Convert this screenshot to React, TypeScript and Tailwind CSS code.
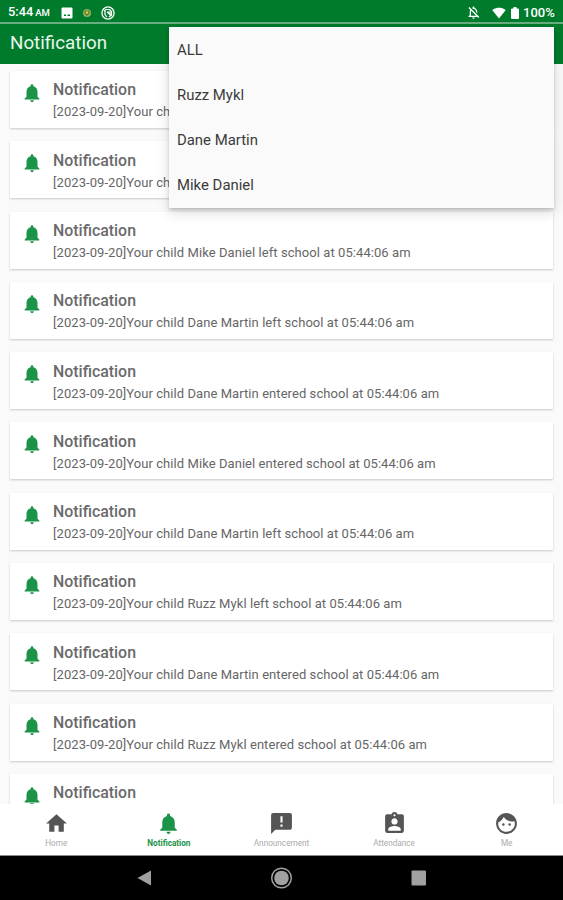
import { useState } from 'react';
import {
  MdAnnouncement,
  MdAssignmentInd,
  MdFace,
  MdHome,
  MdNotifications,
  MdOutlineNotificationsOff,
  MdSignalWifi4Bar,
} from 'react-icons/md';

const notifications = [
  { child: 'Ruzz Mykl', action: 'left' },
  { child: 'Mike Daniel', action: 'left' },
  { child: 'Mike Daniel', action: 'left' },
  { child: 'Dane Martin', action: 'left' },
  { child: 'Dane Martin', action: 'entered' },
  { child: 'Mike Daniel', action: 'entered' },
  { child: 'Dane Martin', action: 'left' },
  { child: 'Ruzz Mykl', action: 'left' },
  { child: 'Dane Martin', action: 'entered' },
  { child: 'Ruzz Mykl', action: 'entered' },
  { child: 'Ruzz Mykl', action: 'entered' },
];

const children = ['ALL', 'Ruzz Mykl', 'Dane Martin', 'Mike Daniel'];

const tabs = [
  { label: 'Home', icon: MdHome },
  { label: 'Notification', icon: MdNotifications },
  { label: 'Announcement', icon: MdAnnouncement },
  { label: 'Attendance', icon: MdAssignmentInd },
  { label: 'Me', icon: MdFace },
];

const StatusBar = () => (
  <div className="flex h-[22px] shrink-0 items-center bg-[#007b2c] pt-[3px] pl-2 pr-[7px] text-white">
    <div className="flex w-[43px] items-baseline gap-0.5 whitespace-nowrap font-medium leading-none">
      <span className="text-[12.8px]">5:44</span>
      <span className="text-[9.5px]">AM</span>
    </div>
    <svg className="ml-2.5 size-3" viewBox="0 0 12 12">
      <rect x="0.5" y="0.5" width="11" height="11" rx="1" fill="#fff" />
      <path d="M3 9V7.500h2V9zM6.500 9V7.500H9V9z" fill="#007b2c" />
    </svg>
    <svg className="ml-[9px] size-2.5" viewBox="0 0 10 10">
      <circle cx="5" cy="5" r="4" fill="#8fb36e" />
      <path d="M2.5 2.5h5v3L5 8 2.5 5.5z" fill="#657c1c" />
      <circle cx="5" cy="4.5" r="1.3" fill="#e0cf45" />
    </svg>
    <svg className="ml-[9px] size-3.5" viewBox="0 0 14 14" fill="none" stroke="#fff">
      <circle cx="7" cy="7" r="6.1" strokeWidth="1.3" />
      <path d="M3 5l2-1.500h3.500L11 6M4 4.500v4L6 11M6 6l4.500 4M10.500 6v3L8 11M6 6h3v2" strokeWidth="1.2" />
    </svg>
    <div className="ml-auto flex items-center">
      <MdOutlineNotificationsOff className="mr-[11px] size-[15px]" />
      <MdSignalWifi4Bar className="mr-[5px] size-[14px]" />
      <svg className="mr-1 h-3 w-2" viewBox="0 0 8 12" fill="#fff">
        <path d="M2.500 0h3v1.500H7a1 1 0 0 1 1 1V11a1 1 0 0 1-1 1H1a1 1 0 0 1-1-1V2.500a1 1 0 0 1 1-1h1.500z" />
      </svg>
      <span className="w-[33px] whitespace-nowrap text-[13px] font-medium leading-none">100%</span>
    </div>
  </div>
);

const App = () => {
  const [activeTab, setActiveTab] = useState('Notification');

  return (
    <div className="relative flex h-[900px] w-[563px] flex-col overflow-hidden bg-[#fafafa] font-[Roboto,sans-serif]">
      <StatusBar />
      <header className="h-[42px] shrink-0 border-t-2 border-[#69ae80] bg-[#007b2c] pl-2.5 pt-[7px]">
        <h1 className="text-[18.8px] leading-6 text-[#e9f5ec]">Notification</h1>
      </header>

      <main className="flex min-h-0 flex-1 flex-col gap-[13.3px] overflow-hidden px-2.5 pt-[7px]">
        {notifications.map((item, index) => (
          <div
            key={index}
            className="flex h-[57px] shrink-0 bg-white pl-[11px] pt-2 shadow-[0_1px_2px_rgba(0,0,0,0.2)]"
          >
            <MdNotifications className="mt-[3px] size-[22px] text-[#1b9348]" />
            <div className="ml-[10px]">
              <h2 className="pt-[0.400px] text-[15.9px] font-medium leading-[22px] text-[#6a6a6a]">Notification</h2>
              <p className="whitespace-nowrap text-[13px] leading-[22px] tracking-[0.065px] text-[#666666]">
                [2023-09-20]Your child {item.child} {item.action} school at 05:44:06 am
              </p>
            </div>
          </div>
        ))}
      </main>

      <nav className="grid h-[51px] shrink-0 grid-cols-5 bg-white">
        {tabs.map(({ label, icon: Icon }) => (
          <button
            key={label}
            onClick={() => setActiveTab(label)}
            className={`flex flex-col items-center pt-[6.500px] ${
              activeTab === label ? 'font-bold text-[#1b9348]' : 'text-[#555555]'
            }`}
          >
            <Icon className="size-[25px]" />
            <span className={`mt-[2px] text-[8.2px] leading-[10px] ${activeTab === label ? '' : 'text-[#aaaaaa]'}`}>
              {label}
            </span>
          </button>
        ))}
      </nav>

      <div className="h-[45px] shrink-0 border-t border-[#8a8a8a] bg-black">
        <svg className="h-11 w-full" viewBox="0 0 563 44">
          <path d="M137.5 22L151 14.500V29.500z" fill="#a0a0a0" />
          <circle cx="281.500" cy="22" r="9.800" fill="none" stroke="#a0a0a0" strokeWidth="1.500" />
          <circle cx="281.500" cy="22" r="7.300" fill="#a0a0a0" />
          <rect x="411.500" y="14.500" width="14.500" height="15" rx="1" fill="#a0a0a0" />
        </svg>
      </div>

      {/* Child filter menu, opened over the header */}
      <ul className="absolute left-[169px] top-[27px] h-[181px] w-[385px] bg-[#fafafa] pt-px shadow-[0_2px_3px_rgba(0,0,0,0.16),0_5px_12px_rgba(0,0,0,0.14)]">
        {children.map((name) => (
          <li key={name} className="flex h-[45px] items-center pl-2 text-[14.9px] text-[#3a3a3a]">
            {name}
          </li>
        ))}
      </ul>
    </div>
  );
};

export default App;
